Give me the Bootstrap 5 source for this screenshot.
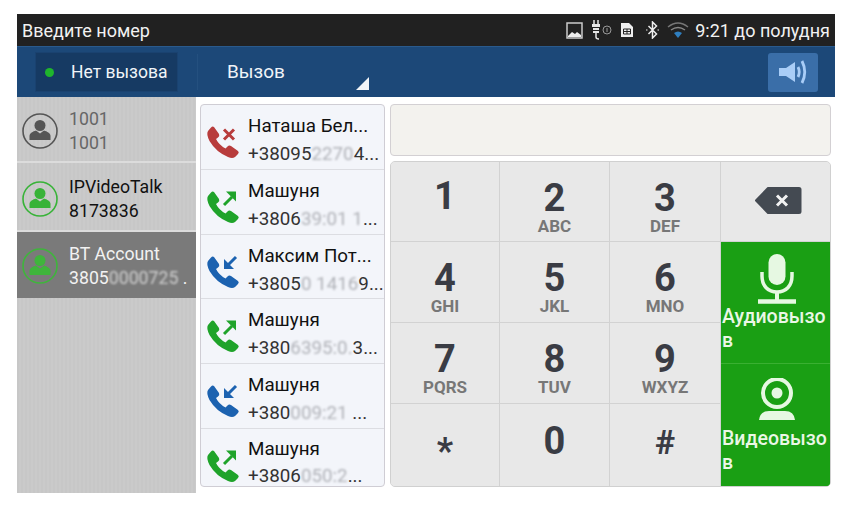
<!DOCTYPE html>
<html lang="ru">
<head>
    <meta charset="UTF-8">
    <meta name="viewport" content="width=device-width, initial-scale=1.0">
    <title>Введите номер</title>
    <link rel="stylesheet" href="https://cdn.jsdelivr.net/npm/bootstrap@5.3.3/dist/css/bootstrap.min.css">
    <style>
        body { background: #fff; font-family: Roboto, "Noto Sans", sans-serif; overflow: hidden; }
        .screen { width: 818px; height: 479px; margin: 14px 0 0 17px; background: #fff; }
        .status-bar { height: 32px; background: #212121; color: #f2f2f2; font-size: 18px; padding: 0 5px; }
        .gap-plug { margin-left: 8px; }
        .gap-sim { margin-left: 5px; }
        .gap-bt { margin-left: 12px; }
        .gap-wifi { margin-left: 8px; }
        .gap-time { margin-left: 6px; }
        .top-bar { height: 51px; background: #1c4878; color: #f0f4f8; border-top: 1px solid #2a5a8c; }
        .call-state { width: 143px; height: 40px; margin-left: 18px; background: #163a63; border: 1px solid #1a4270; font-size: 17.5px; padding-left: 9px; gap: 17px; white-space: nowrap; }
        .led { width: 9px; height: 9px; border-radius: 50%; background: #1fb52d; }
        .call-mode { position: relative; width: 172px; height: 36px; margin-left: 19px; border-left: 1px solid #24507f; padding-left: 29px; font-size: 19px; line-height: 36px; }
        .call-mode::after { content: ""; position: absolute; right: 0; bottom: 0; border-style: solid; border-width: 0 0 13px 13px; border-color: transparent transparent #f2f5f8 transparent; }
        .speaker-btn { width: 50px; height: 39px; margin: 0 17px 0 auto; background: #3a6ea8; border-radius: 3px; }
        .main-area { height: 396px; }
        .accounts { width: 179px; background: repeating-linear-gradient(90deg, #c7c7c7 0 2px, #cacaca 2px 4px); }
        .account { height: 66px; padding: 10px 0 0 5px; gap: 11px; border-bottom: 2px solid #dcdcdc; font-size: 17.7px; line-height: 24px; color: #111; white-space: nowrap; }
        .account svg { margin-top: 6px; flex: none; }
        .account.offline { color: #666; }
        .account.online { height: 69px; padding-top: 12px; }
        .account.current { background: #7a7a7a; color: #f2f2f2; border-bottom: 0; }
        .call-log { width: 185px; height: 383px; margin: 7px 0 0 4px; background: #f3f5fa; border: 1px solid #cfcdd4; border-radius: 4px; overflow: hidden; --bs-list-group-bg: transparent; --bs-list-group-border-color: #dcdde2; }
        .log-row { height: 65px; padding: 7px 0 0 5px; gap: 8px; font-size: 18.8px; line-height: 28px; color: #111; white-space: nowrap; background: transparent; }
        .log-row:last-child { height: 57px; line-height: 27px; }
        .log-row svg { margin-top: 13px; flex: none; }
        .log-num { color: #333; font-size: 18.8px; }
        .smudge { color: #b0b2b8; filter: blur(.85px); }
        .current .smudge { color: #d0d0d0; }
        .dial-side { width: 441px; margin: 7px 0 0 5px; }
        .number-box { height: 52px; background: #f3f2ee; border: 1px solid #d3d0d3; border-radius: 4px; }
        .keypad { display: grid; grid-template-columns: 109px 110px 111px 111px; grid-template-rows: 80px 81px 81px 84px; margin-top: 5px; height: 326px; background: #e8e8e8; border: 1px solid #d0d0d0; border-radius: 5px; overflow: hidden; }
        .key { border-radius: 0; border: 0; border-right: 1px solid #d2d2d2; border-bottom: 1px solid #d2d2d2; background: #e8e8e8; color: #3a3c44; padding: 17px 0 0; line-height: 1; font-weight: 700; font-size: 38px; display: flex; flex-direction: column; align-items: center; justify-content: flex-start; }
        .key small { font-size: 17px; font-weight: 700; color: #777; margin-top: 1px; }
        .key.solo { padding-top: 15px; }
        .key.solo.bottom-key { padding-top: 18px; }
        .key.symbol { padding-top: 21px; font-size: 34px; }
        .key.star { padding-top: 29px; font-size: 36px; }
        .key-back { grid-column: 4; grid-row: 1; border-right: 0; padding: 24px 0 0 3px; }
        .action-col { grid-column: 4; grid-row: 2 / 5; display: flex; flex-direction: column; background: #1a9f14; }
        .action-btn { border: 0; border-radius: 0; background: #1a9f14; color: #eaf7e6; padding: 12px 0 0 1px; height: 121px; font-size: 19.5px; font-weight: 500; line-height: 24px; text-align: left; word-break: break-all; display: flex; flex-direction: column; justify-content: flex-start; }
        .action-btn + .action-btn { border-top: 1px solid #3ab032; height: 124px; padding-top: 14px; }
        .action-btn svg { display: block; flex: none; margin: 0 auto 1px; }
        .action-btn + .action-btn svg { margin-bottom: 7px; }
    </style>
</head>
<body>
    <svg width="0" height="0" class="d-block">
        <defs>
            <symbol id="handset" viewBox="0 0 34 34">
                <path d="M8 2L13 9Q14 11 12 12.500L10 14Q13 20 19.500 23.500L21.500 21.500Q23 20 25 21L32 26Q33.500 27.500 32 29L29 32Q26.500 34 22 32Q10 27 3.500 16Q0 9 2 6L5 2.500Q6.500 1 8 2Z" fill="currentColor"/>
            </symbol>
            <symbol id="person" viewBox="0 0 36 36">
                <circle cx="18" cy="18" r="17" fill="none" stroke="currentColor" stroke-width="1.600"/>
                <circle cx="18" cy="12.500" r="5.500" fill="currentColor"/>
                <path d="M7.500 27v-4c0-3 3.500-4.500 6.500-5.500l4 3 4-3c3 1 6.500 2.500 6.500 5.500v4z" fill="currentColor"/>
            </symbol>
        </defs>
    </svg>

    <div class="screen d-flex flex-column">
        <div class="status-bar d-flex align-items-center justify-content-between">
            <span>Введите номер</span>
            <div class="d-flex align-items-center">
                <svg width="17" height="17" viewBox="0 0 17 17"><rect x="1" y="1" width="15" height="15" fill="#222" stroke="#ccc" stroke-width="1.500"/><path d="M2 14l4-4 3 2 2-2 4 3v2H2z" fill="#eee"/></svg>
                <svg class="gap-plug" width="24" height="20" viewBox="0 0 24 20"><path d="M3 0v4M7 0v4" stroke="#e6e6e6" stroke-width="1.500"/><path d="M1 4h8v3H1zM2 8h6v2H2zM2 11h6v2H2z" fill="#e6e6e6"/><path d="M5 13v4q0 2 3 2" stroke="#e6e6e6" stroke-width="1.500" fill="none"/><circle cx="16" cy="10" r="4" fill="none" stroke="#999"/><path d="M16 8v4" stroke="#999"/></svg>
                <svg class="gap-sim" width="14" height="16" viewBox="0 0 14 16"><path d="M1 1h8l4 4v10H1z" fill="#eee"/><path d="M3.500 7h7v5h-7zM7 7v5M3.500 9.500h7" stroke="#222" fill="none"/></svg>
                <svg class="gap-bt" width="13" height="18" viewBox="0 0 13 18"><path d="M2.500 5l8 8-4 4V1l4 4-8 8" stroke="#eee" stroke-width="1.500" fill="none"/><path d="M0 9h1.500M11.500 9H13" stroke="#eee"/></svg>
                <svg class="gap-wifi" width="22" height="18" viewBox="0 0 22 18"><path d="M1 6q10-8 20 0" stroke="#777" stroke-width="1.500" fill="none"/><path d="M4 9q7-5 14 0" stroke="#888" stroke-width="1.500" fill="none"/><path d="M7 12q4-3 8 0l-4 5z" fill="#2f7fc0"/></svg>
                <span class="gap-time">9:21 до полудня</span>
            </div>
        </div>

        <div class="top-bar d-flex align-items-center">
            <div class="call-state d-flex align-items-center"><span class="led"></span>Нет вызова</div>
            <div class="call-mode">Вызов</div>
            <div class="speaker-btn d-flex align-items-center justify-content-center">
                <svg width="30" height="26" viewBox="0 0 30 26"><path d="M1 9h7l9-6v20l-9-6H1z" fill="#a9cdf7"/><path d="M20 8q2.500 5 0 10" stroke="#a9cdf7" stroke-width="2.800" fill="none"/><path d="M24 2q5.500 11 0 22" stroke="#a9cdf7" stroke-width="2.800" fill="none"/></svg>
            </div>
        </div>

        <div class="main-area d-flex">
            <div class="accounts">
                <div class="account offline d-flex">
                    <svg width="36" height="36" style="color:#555"><use href="#person"/></svg>
                    <div>1001<br>1001</div>
                </div>
                <div class="account online d-flex">
                    <svg width="36" height="36" style="color:#38b338"><use href="#person"/></svg>
                    <div>IPVideoTalk<br>8173836</div>
                </div>
                <div class="account current d-flex">
                    <svg width="36" height="36" style="color:#3fb53c"><use href="#person"/></svg>
                    <div>BT Account<br>3805<span class="smudge">0000725</span> .</div>
                </div>
            </div>

            <div class="call-log list-group list-group-flush">
                <div class="log-row list-group-item d-flex">
                    <svg width="34" height="34" viewBox="0 0 34 34" style="color:#b83c3c"><use href="#handset"/><path d="M18 4.500l10 10M28 4.500l-10 10" stroke="#b83c3c" stroke-width="3"/></svg>
                    <div>Наташа Бел...<br><span class="log-num">+38095<span class="smudge">2270</span>4...</span></div>
                </div>
                <div class="log-row list-group-item d-flex">
                    <svg width="34" height="34" viewBox="0 0 34 34" style="color:#1fa32a"><use href="#handset"/><path d="M18 15l8-8" stroke="#1fa32a" stroke-width="3"/><path d="M20 1.500h10v10z" fill="#1fa32a"/></svg>
                    <div>Машуня<br><span class="log-num">+3806<span class="smudge">39:01 1</span>...</span></div>
                </div>
                <div class="log-row list-group-item d-flex">
                    <svg width="34" height="34" viewBox="0 0 34 34" style="color:#1c62b0"><use href="#handset"/><path d="M30 2l-8 8" stroke="#1c62b0" stroke-width="3"/><path d="M18 4v10h10z" fill="#1c62b0"/></svg>
                    <div>Максим Пот...<br><span class="log-num">+3805<span class="smudge">0 1416</span>9...</span></div>
                </div>
                <div class="log-row list-group-item d-flex">
                    <svg width="34" height="34" viewBox="0 0 34 34" style="color:#1fa32a"><use href="#handset"/><path d="M18 15l8-8" stroke="#1fa32a" stroke-width="3"/><path d="M20 1.500h10v10z" fill="#1fa32a"/></svg>
                    <div>Машуня<br><span class="log-num">+380<span class="smudge">6395:0.</span>3...</span></div>
                </div>
                <div class="log-row list-group-item d-flex">
                    <svg width="34" height="34" viewBox="0 0 34 34" style="color:#1c62b0"><use href="#handset"/><path d="M30 2l-8 8" stroke="#1c62b0" stroke-width="3"/><path d="M18 4v10h10z" fill="#1c62b0"/></svg>
                    <div>Машуня<br><span class="log-num">+380<span class="smudge">009:21</span> ...</span></div>
                </div>
                <div class="log-row list-group-item d-flex">
                    <svg width="34" height="34" viewBox="0 0 34 34" style="color:#1fa32a"><use href="#handset"/><path d="M18 15l8-8" stroke="#1fa32a" stroke-width="3"/><path d="M20 1.500h10v10z" fill="#1fa32a"/></svg>
                    <div>Машуня<br><span class="log-num">+3806<span class="smudge">050:2</span>...</span></div>
                </div>
            </div>

            <div class="dial-side">
                <div class="number-box"></div>
                <div class="keypad">
                    <button type="button" class="btn key solo">1</button>
                    <button type="button" class="btn key">2<small>ABC</small></button>
                    <button type="button" class="btn key">3<small>DEF</small></button>
                    <button type="button" class="btn key key-back">
                        <svg width="48" height="29" viewBox="0 0 48 29"><path d="M2 14.500L14 2h31a1.500 1.500 0 0 1 1.500 1.500v22a1.500 1.500 0 0 1-1.500 1.500H14z" fill="#444a52" stroke="#444a52" stroke-width="2" stroke-linejoin="round"/><path d="M23 9.500l10 10M33 9.500l-10 10" stroke="#f2f2f2" stroke-width="3"/></svg>
                    </button>
                    <button type="button" class="btn key">4<small>GHI</small></button>
                    <button type="button" class="btn key">5<small>JKL</small></button>
                    <button type="button" class="btn key">6<small>MNO</small></button>
                    <div class="action-col">
                        <button type="button" class="btn action-btn">
                            <svg width="40" height="50" viewBox="0 0 40 50"><rect x="11.500" y="0" width="17" height="31" rx="8.500" fill="#e6f8e2"/><path d="M5 18v4c0 10 6 16 15 16s15-6 15-16v-4" stroke="#e6f8e2" stroke-width="3.500" fill="none"/><path d="M20 38v8" stroke="#e6f8e2" stroke-width="4"/><path d="M1 47.500h38" stroke="#e6f8e2" stroke-width="4.500"/></svg>
                            Аудиовызов
                        </button>
                        <button type="button" class="btn action-btn">
                            <svg width="38" height="42" viewBox="0 0 38 42"><circle cx="19" cy="15" r="14" fill="none" stroke="#e6f8e2" stroke-width="4"/><circle cx="19" cy="15" r="5.500" fill="#e6f8e2"/><path d="M1 42q1-9 10-9h16q9 0 10 9z" fill="#e6f8e2"/></svg>
                            Видеовызов
                        </button>
                    </div>
                    <button type="button" class="btn key">7<small>PQRS</small></button>
                    <button type="button" class="btn key">8<small>TUV</small></button>
                    <button type="button" class="btn key">9<small>WXYZ</small></button>
                    <button type="button" class="btn key symbol star">*</button>
                    <button type="button" class="btn key solo bottom-key">0</button>
                    <button type="button" class="btn key symbol">#</button>
                </div>
            </div>
        </div>
    </div>

    <script src="https://cdn.jsdelivr.net/npm/bootstrap@5.3.3/dist/js/bootstrap.bundle.min.js"></script>
</body>
</html>
